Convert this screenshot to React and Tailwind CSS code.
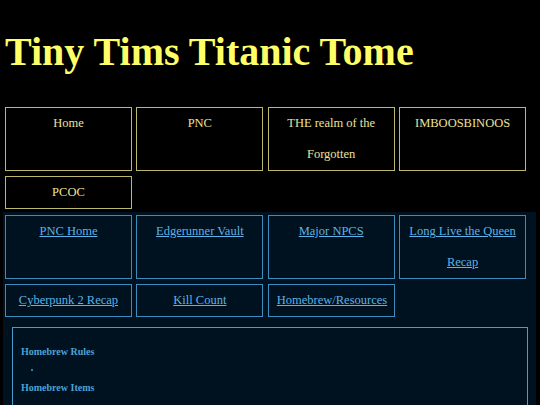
const mainLinks = [
    { label: "Home" },
    { label: "PNC" },
    { label: "THE realm of the Forgotten" },
    { label: "IMBOOSBINOOS" },
    { label: "PCOC" },
];

const pncLinks = [
    "PNC Home",
    "Edgerunner Vault",
    "Major NPCS",
    "Long Live the Queen Recap",
    "Cyberpunk 2 Recap",
    "Kill Count",
    "Homebrew/Resources",
];

const sections = ["Homebrew Rules", "Homebrew Items"];

export default function App() {
    return (
        <div className="min-h-screen bg-black overflow-hidden font-['Liberation_Serif','Times_New_Roman',serif]">
            <h1 className="pt-[30px] pl-[5px] mb-[33px] text-[40px] leading-[44px] font-bold text-[#ffff66]">
                Tiny Tims Titanic Tome
            </h1>

            {/* main nav */}
            <div className="ml-[5px] w-[521px] grid grid-cols-4 gap-x-[4.5px] gap-y-[5px]">
                {mainLinks.map((l) => (
                    <div key={l.label} className="border border-[#bdb76b] text-center text-[12.5px] leading-[31px] text-[#ece29a] px-2">
                        {l.label}
                    </div>
                ))}
            </div>

            {/* pnc section */}
            <div className="mt-[3px] ml-[3px] w-[533px] min-h-[200px] bg-[#00111f] pt-[3px] pl-[2px]">
                <div className="w-[521px] grid grid-cols-4 gap-x-[4.5px] gap-y-[5px]">
                    {pncLinks.map((l) => (
                        <div key={l} className="border border-[#3b8dbd] text-center text-[12.5px] leading-[31px] px-2">
                            <a href="#" className="text-[#5cb3e6] underline">{l}</a>
                        </div>
                    ))}
                </div>

                <div className="mt-[10px] ml-[7px] w-[516px] border-t border-l border-r border-[#4a9ccc] pt-[15px] pl-[8px] pb-4">
                    {sections.map((s) => (
                        <div key={s}>
                            <div className="h-[18px] leading-[18px] text-[10px] font-bold text-[#4aa3d6]">{s}</div>
                            <div className="h-[18px] flex items-center pl-[10px]">
                                <span className="block w-[2px] h-[2px] rounded-full bg-[#4aa3d6]"></span>
                            </div>
                        </div>
                    ))}
                </div>
            </div>
        </div>
    );
}
